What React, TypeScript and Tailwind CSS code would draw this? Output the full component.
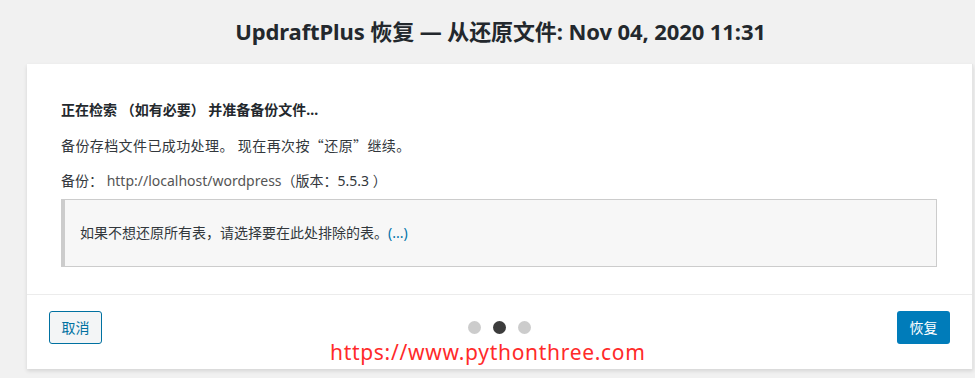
import React from 'react';

const cjk = '"Noto Sans", "Noto Sans CJK SC", sans-serif';
const cjkFirst = '"Noto Sans CJK SC", sans-serif';

export default function App() {
  return (
    <div
      className="relative w-[975px] h-[378px] overflow-hidden bg-[#f1f1f1] text-[#32373c]"
      style={{ fontFamily: cjk }}
    >
      <h1 className="h-[64px] flex items-center justify-center pl-[26px] text-[22px] font-bold text-[#23282d] tracking-[-0.1px] pb-[1px]">
        UpdraftPlus 恢复 — 从还原文件: Nov 04, 2020 11:31
      </h1>

      <div className="ml-[27px] mr-[2px] bg-white shadow-[0_2px_4px_rgba(0,0,0,0.12)] border-r border-[#e5e5e5]">
        <div className="px-[34px] pt-[36px] pb-[27px] text-[14px] leading-[20px]">
          <p className="font-bold text-[#23282d]">正在检索 （如有必要） 并准备备份文件...</p>
          <p className="mt-[15px] h-[20px] tracking-[0.4px]">
            备份存档文件已成功处理。 现在再次按<span style={{ fontFamily: cjkFirst }}>“</span>还原
            <span style={{ fontFamily: cjkFirst }}>”</span>继续。
          </p>
          <p className="mt-[16px]">
            备份： <span className="text-[#555]">http://localhost/wordpress</span>（版本：5.5.3 ）
          </p>
          <div className="mt-[8px] mr-[1px] h-[68px] flex items-center pl-[15px] bg-[#f7f7f7] border border-[#ccc] border-l-[4px] border-l-[#ccc]">
            如果不想还原所有表，请选择要在此处排除的表。<span className="text-[#0073aa]">(...)</span>
          </div>
        </div>

        <div className="border-t border-[#ececec] h-[75px] flex items-center justify-between px-[22px] pb-[9px]">
          <button
            type="button"
            className="h-[33px] w-[53px] rounded-[3px] border border-[#0071a1] bg-[#f3f5f6] text-[#0071a1] text-[14px]"
          >
            取消
          </button>
          <div className="flex items-center gap-[12px]">
            <span className="w-[13px] h-[13px] rounded-full bg-[#cccccc]" />
            <span className="w-[13px] h-[13px] rounded-full bg-[#3c3c3c]" />
            <span className="w-[13px] h-[13px] rounded-full bg-[#cccccc]" />
          </div>
          <button
            type="button"
            className="h-[33px] w-[53px] rounded-[3px] bg-[#007cba] text-white text-[14px]"
          >
            恢复
          </button>
        </div>
      </div>

      <div className="absolute left-[330px] top-[338px] text-[21px] leading-[28px] text-[#ff2a2a] tracking-[0.7px]">
        https://www.pythonthree.com
      </div>
    </div>
  );
}
